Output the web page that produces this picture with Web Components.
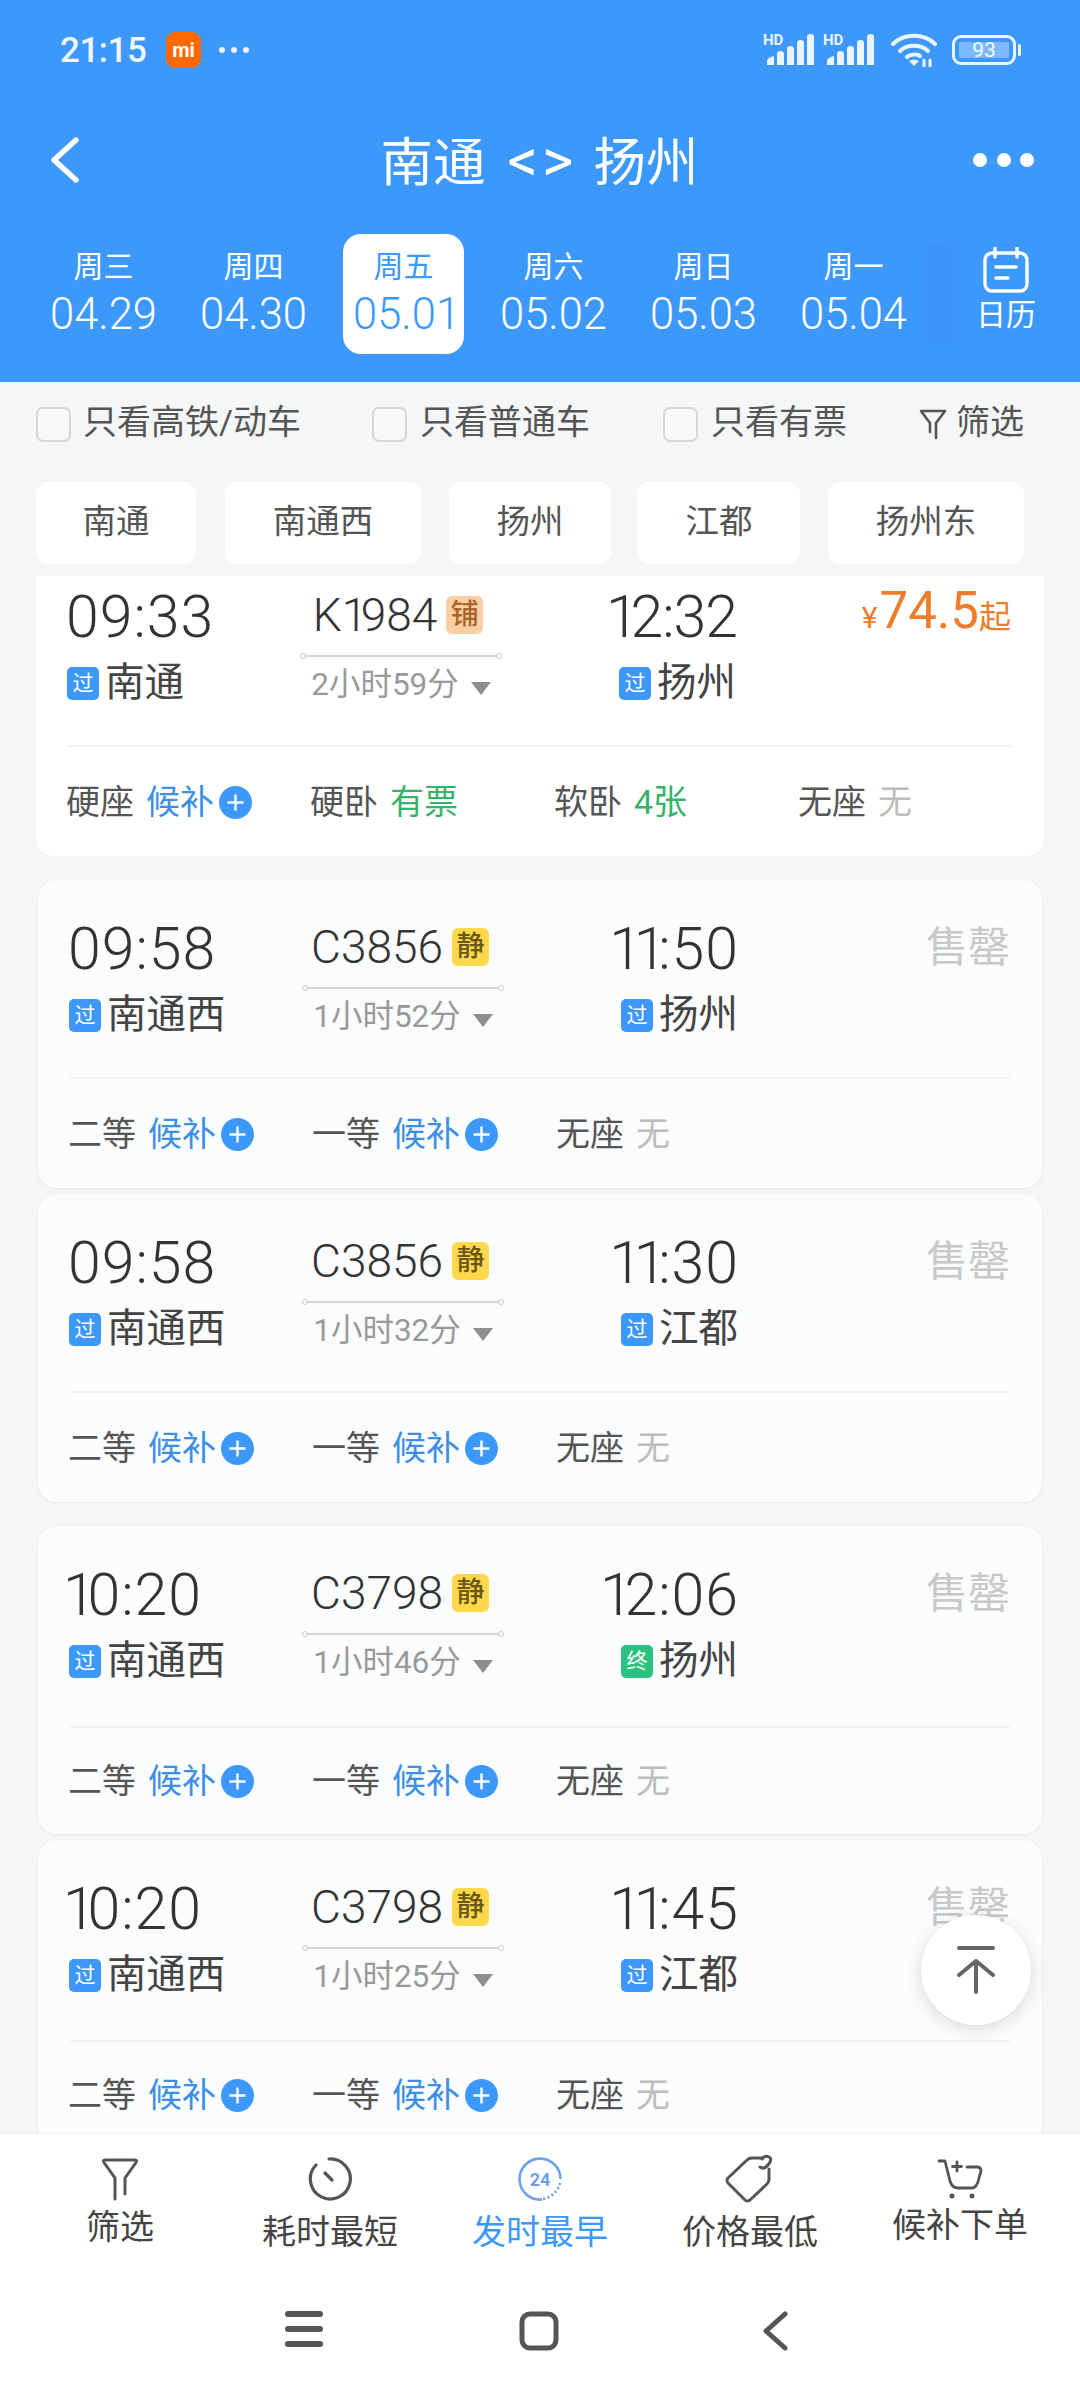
<!DOCTYPE html>
<html lang="zh">
<head>
<meta charset="utf-8">
<title>南通 - 扬州</title>
<style>
  html, body { margin: 0; padding: 0; }
  body {
    width: 1080px; height: 2400px; overflow: hidden;
    display: flex; flex-direction: column;
    background: #f5f6f7; color: #333;
    font-family: Roboto, "Noto Sans CJK SC", sans-serif;
  }
  train-list { flex: 1; min-height: 0; }
</style>
</head>
<body>
<app-header></app-header>
<filter-row></filter-row>
<station-chips></station-chips>
<train-list>
  <train-card first dep="09:33" arr="12:32" tight no="K1984" tag="铺" tagtype="berth" dur="2小时59分" from="南通" to="扬州" price="74.5">
    <seat-item name="硬座" status="候补" kind="wait"></seat-item>
    <seat-item name="硬卧" status="有票" kind="ok"></seat-item>
    <seat-item name="软卧" status="4张" kind="ok"></seat-item>
    <seat-item name="无座" status="无" kind="none"></seat-item>
  </train-card>
  <train-card dep="09:58" arr="11:50" no="C3856" tag="静" dur="1小时52分" from="南通西" to="扬州">
    <seat-item name="二等" status="候补" kind="wait"></seat-item>
    <seat-item name="一等" status="候补" kind="wait"></seat-item>
    <seat-item name="无座" status="无" kind="none"></seat-item>
  </train-card>
  <train-card close dep="09:58" arr="11:30" no="C3856" tag="静" dur="1小时32分" from="南通西" to="江都">
    <seat-item name="二等" status="候补" kind="wait"></seat-item>
    <seat-item name="一等" status="候补" kind="wait"></seat-item>
    <seat-item name="无座" status="无" kind="none"></seat-item>
  </train-card>
  <train-card tall dep="10:20" arr="12:06" no="C3798" tag="静" dur="1小时46分" from="南通西" to="扬州" end>
    <seat-item name="二等" status="候补" kind="wait"></seat-item>
    <seat-item name="一等" status="候补" kind="wait"></seat-item>
    <seat-item name="无座" status="无" kind="none"></seat-item>
  </train-card>
  <train-card tall close dep="10:20" arr="11:45" no="C3798" tag="静" dur="1小时25分" from="南通西" to="江都">
    <seat-item name="二等" status="候补" kind="wait"></seat-item>
    <seat-item name="一等" status="候补" kind="wait"></seat-item>
    <seat-item name="无座" status="无" kind="none"></seat-item>
  </train-card>
  <scroll-top></scroll-top>
</train-list>
<bottom-tabs></bottom-tabs>
<nav-bar></nav-bar>

<script>
const FONT = 'Roboto, "Noto Sans CJK SC", sans-serif';
// the phone font has a narrow 1, Roboto's is tabular
const ONE_CSS = '.one { letter-spacing: -.14em; }';
const narrowOnes = s => s.replace(/1/g, '<span class="one">1</span>');

class StatusBar extends HTMLElement {
  constructor() {
    super();
    this.attachShadow({ mode: 'open' });
    const signal = `
      <svg width="50" height="32" viewBox="0 0 50 32" fill="#eaf4ff">
        <path d="M2 31v-4q0-3 7-5v9zM12 31V20q0-3 3.500-3t3.500 3v11zM22 31V15q0-3 3.500-3t3.500 3v16zM32 31V9q0-3 3.500-3t3.500 3v22zM42 31V3q0-3 3.500-3t3.500 3v28z"/>
      </svg>`;
    this.shadowRoot.innerHTML = `
      <style>
        :host { display: flex; align-items: center; height: 100px; padding: 0 60px; box-sizing: border-box; color: #f0f7ff; }
        .time { font: 500 35px ${FONT}; letter-spacing: -.5px; width: 106px; }
        .mi { width: 35px; height: 36px; border-radius: 9px; background: #ff6900; color: #fff; font: 700 20px Roboto, sans-serif; display: flex; align-items: center; justify-content: center; }
        .dots { display: flex; gap: 6px; margin-left: 18px; }
        .dots i { width: 6px; height: 6px; border-radius: 50%; background: #eaf4ff; }
        .right { margin-left: auto; display: flex; align-items: center; margin-right: -1px; }
        .sig { position: relative; width: 50px; height: 32px; margin-right: 10px; }
        .sig svg { display: block; }
        .sig span { position: absolute; left: -2px; top: 0; font: 700 15px/12px Roboto, sans-serif; color: #eaf4ff; }
        .wifi { margin: 0 15px 0 6px; }
        .bat { width: 64px; height: 30px; border: 3px solid #eaf4ff; border-radius: 9px; box-sizing: border-box; padding: 4px; display: flex; }
        .bat b { flex: 1; background: #7db9fd; border-radius: 2px; font: 400 21px/16px Roboto, sans-serif; text-align: center; color: #f4f9ff; }
        .nub { width: 3px; height: 12px; background: #eaf4ff; border-radius: 2px; margin-left: 2px; }
      </style>
      <span class="time">21:15</span>
      <span class="mi">mi</span>
      <span class="dots"><i></i><i></i><i></i></span>
      <div class="right">
        <div class="sig"><span>HD</span>${signal}</div>
        <div class="sig"><span>HD</span>${signal}</div>
        <svg class="wifi" width="46" height="34" viewBox="0 0 46 34" fill="none" stroke="#eaf4ff" stroke-width="4" stroke-linecap="round">
          <path d="M2 11C13 0 33 0 44 11"/><path d="M9 18C16 11 30 11 37 18"/><path d="M16 24C19 21 27 21 29 23"/>
          <path d="M23 33l-5-5q5-3 10 0z" fill="#eaf4ff" stroke="none"/>
          <path d="M33 33v-6M39 33v-6" stroke-width="3"/>
        </svg>
        <div class="bat"><b>93</b></div><i class="nub"></i>
      </div>`;
  }
}
customElements.define('status-bar', StatusBar);

class DateTab extends HTMLElement {
  constructor() {
    super();
    this.attachShadow({ mode: 'open' });
    this.shadowRoot.innerHTML = `
      <style>
        :host { display: flex; flex-direction: column; align-items: center; width: 121px; height: 120px; border-radius: 18px; color: #fff; box-sizing: border-box; padding-top: 13px; }
        :host([active]) { background: #fff; color: #3d98fc; }
        .w { font: 400 30px/40px ${FONT}; }
        .d { font: 300 43.500px/50px ${FONT}; margin-top: 3px; white-space: nowrap; }
        ${ONE_CSS}
      </style>
      <span class="w">${this.getAttribute('week')}</span>
      <span class="d">${narrowOnes(this.getAttribute('date'))}</span>`;
  }
}
customElements.define('date-tab', DateTab);

class AppHeader extends HTMLElement {
  constructor() {
    super();
    this.attachShadow({ mode: 'open' });
    this.shadowRoot.innerHTML = `
      <style>
        :host { display: block; height: 382px; background: #3d98fc; color: #fff; }
        .title { display: flex; align-items: center; height: 120px; padding: 0 46px 0 48px; }
        h1 { margin: -5px 0 0; flex: 1; text-align: center; white-space: nowrap; font: 400 52.500px ${FONT}; padding-left: 24px; box-sizing: border-box; }
        h1 span { margin: 0 16px 0 22px; font-size: 60px; letter-spacing: 4px; }
        .more { display: flex; gap: 9.500px; }
        .more i { width: 14px; height: 14px; border-radius: 50%; background: #fff; }
        .dates { display: flex; gap: 29px; padding: 14px 0 0 43px; align-items: flex-start; }
        .cal { position: relative; margin-left: 8px; padding: 13px 0 0 10px; width: 90px; display: flex; flex-direction: column; align-items: center; font: 400 30px/40px ${FONT}; }
        .cal span { margin-top: 2px; }
        .cal::before { content: ""; position: absolute; left: -34px; top: 12px; width: 44px; height: 98px; background: linear-gradient(90deg, rgba(61,152,252,0), rgba(50,138,242,.4), rgba(61,152,252,0)); }
      </style>
      <status-bar></status-bar>
      <div class="title">
        <svg width="34" height="46" viewBox="0 0 34 46" fill="none" stroke="#fff" stroke-width="5.500" stroke-linecap="round" stroke-linejoin="round"><path d="M28 3L6 23l22 20"/></svg>
        <h1>南通<span>&lt;&gt;</span>扬州</h1>
        <div class="more"><i></i><i></i><i></i></div>
      </div>
      <div class="dates">
        <date-tab week="周三" date="04.29"></date-tab>
        <date-tab week="周四" date="04.30"></date-tab>
        <date-tab week="周五" date="05.01" active></date-tab>
        <date-tab week="周六" date="05.02"></date-tab>
        <date-tab week="周日" date="05.03"></date-tab>
        <date-tab week="周一" date="05.04"></date-tab>
        <div class="cal">
          <svg width="46" height="46" viewBox="0 0 46 46" fill="none" stroke="#fff" stroke-width="3.400" stroke-linecap="round"><rect x="2" y="6" width="42" height="38" rx="7"/><path d="M12 1v9M34 1v9M13 20h20M13 31h12"/></svg>
          <span>日历</span>
        </div>
      </div>`;
  }
}
customElements.define('app-header', AppHeader);

class FilterRow extends HTMLElement {
  constructor() {
    super();
    this.attachShadow({ mode: 'open' });
    const opt = (t, w) => `<label style="width:${w}px"><i></i><span>${t}</span></label>`;
    this.shadowRoot.innerHTML = `
      <style>
        :host { display: flex; align-items: flex-start; height: 82px; padding: 25px 0 0 36px; box-sizing: border-box; color: #555; font: 400 34px/36px ${FONT}; }
        label { display: flex; align-items: center; white-space: nowrap; }
        label span { margin-top: -6px; }
        i { width: 35px; height: 35px; box-sizing: border-box; border: 2px solid #d4d6d9; border-radius: 7px; background: #f7f8f9; margin-right: 12px; flex: none; }
        label + label span { margin-left: 1px; }
        .f { display: flex; align-items: center; gap: 9px; }
        .f span { margin-top: -3px; }
      </style>
      ${opt('只看高铁/动车', 336)}${opt('只看普通车', 291)}${opt('只看有票', 256)}
      <div class="f">
        <svg width="28" height="32" viewBox="0 0 28 32" fill="none" stroke="#555" stroke-width="2.600" stroke-linejoin="round" stroke-linecap="round"><path d="M2 3h24l-9 12v15M11 24V15L2 3"/></svg>
        <span>筛选</span>
      </div>`;
  }
}
customElements.define('filter-row', FilterRow);

class StationChips extends HTMLElement {
  constructor() {
    super();
    this.attachShadow({ mode: 'open' });
    const chips = [['南通', 160, 0], ['南通西', 196, 29], ['扬州', 162, 28], ['江都', 162, 27], ['扬州东', 196, 28]];
    this.shadowRoot.innerHTML = `
      <style>
        :host { display: flex; height: 112px; padding: 18px 0 0 36px; box-sizing: border-box; }
        div { height: 82px; background: #fff; border-radius: 12px; color: #555; font: 400 33.500px/80px ${FONT}; text-align: center; }
      </style>
      ${chips.map(c => `<div style="width:${c[1]}px;margin-left:${c[2]}px">${c[0]}</div>`).join('')}`;
  }
}
customElements.define('station-chips', StationChips);

class TrainList extends HTMLElement {
  constructor() {
    super();
    this.attachShadow({ mode: 'open' });
    this.shadowRoot.innerHTML = `
      <style>
        :host { display: block; position: relative; overflow: hidden; }
        .wrap { display: flex; flex-direction: column; padding: 0 36px; margin-top: -30px; }
      </style>
      <div class="wrap"><slot></slot></div>`;
  }
}
customElements.define('train-list', TrainList);

class SeatItem extends HTMLElement {
  constructor() {
    super();
    this.attachShadow({ mode: 'open' });
    const kind = this.getAttribute('kind');
    const plus = kind === 'wait' ? `
      <svg class="plus" width="33" height="33" viewBox="0 0 33 33"><circle cx="16.500" cy="16.500" r="16.500" fill="#3d98fc"/><path d="M16.500 8.500v16M8.500 16.500h16" stroke="#fff" stroke-width="2.400"/></svg>` : '';
    this.shadowRoot.innerHTML = `
      <style>
        :host { display: flex; align-items: center; font: 400 34px/40px ${FONT}; color: #555; white-space: nowrap; margin-left: -2px; }
        .s { margin-left: 12px; }
        .wait { color: #3d8fe6; }
        .ok { color: #38b26a; }
        .none { color: #bdbdbd; }
        .plus { margin-left: 5px; }
      </style>
      <span>${this.getAttribute('name')}</span>
      <span class="s ${kind}">${this.getAttribute('status')}</span>${plus}`;
  }
}
customElements.define('seat-item', SeatItem);

class TrainCard extends HTMLElement {
  constructor() {
    super();
    this.attachShadow({ mode: 'open' });
    const a = n => this.getAttribute(n);
    const right = a('price')
      ? `<div class="price"><small>¥</small>${a('price')}<em>起</em></div>`
      : `<div class="sold">售罄</div>`;
    this.shadowRoot.innerHTML = `
      <style>
        :host { display: block; height: 308px; margin: 24px 2px 0; background: #fbfcfe; border-radius: 18px; box-shadow: 0 1px 3px rgba(0,0,0,.06), 0 0 2px rgba(0,0,0,.05); padding: 0 32px; box-sizing: border-box; position: relative; }
        :host([close]) { margin-top: 6px; }
        :host([first]) { background: #fff; margin: 0; padding: 2px 33px 0 32px; box-shadow: none; height: 310px; }
        .top { display: grid; grid-template-columns: 233px 200px 234px 1fr; height: 197px; border-bottom: 2px solid #f0f1f3; }
        :host([tall]) .top { height: 200px; }
        :host([tall]) .seats { padding-top: 33px; }
        .dep, .arr { display: flex; flex-direction: column; }
        .arr { align-items: flex-end; margin-right: -2px; }
        .t { font: 300 59px/68px ${FONT}; color: #333; margin-top: 35px; letter-spacing: 1px; margin-left: -2px; }
        .t.lead { margin-left: -7px; }
        :host([tight]) .arr .t { letter-spacing: -1px; }
        .st { display: flex; align-items: center; font: 400 39.500px/46px ${FONT}; color: #444; margin-top: 9px; gap: 6px; white-space: nowrap; margin-left: -1px; }
        .arr .st { margin-right: 1px; }
        .st b { width: 32px; height: 33px; border-radius: 5px; background: #3d98fc; color: #fff; font: 400 21px/33px ${FONT}; text-align: center; }
        .st b.end { background: #2cc17f; }
        .mid { display: flex; flex-direction: column; align-items: center; }
        .no { display: flex; align-items: center; gap: 9px; height: 40px; margin-top: 47px; font: 300 46px/40px ${FONT}; color: #333; margin-left: -6px; }
        .no b { width: 37px; height: 38px; border-radius: 6px; background: #ffd84d; color: #6a5813; font: 500 28px/38px ${FONT}; text-align: center; }
        .no b.berth { background: #fbcfa5; color: #a9642a; }
        .line { position: relative; align-self: stretch; height: 2px; background: #d5d6d8; margin: 20px 0 0; }
        .line::before, .line::after { content: ""; position: absolute; top: -2px; width: 6px; height: 6px; box-sizing: border-box; border: 1px solid #c8c9cb; border-radius: 50%; background: #fff; }
        .line::before { left: -1px; } .line::after { right: -1px; }
        .dur { display: flex; align-items: center; gap: 12px; margin-top: 7px; font: 400 31.500px/42px ${FONT}; color: #999; white-space: nowrap; }
        .dur i { width: 0; height: 0; border-left: 10px solid transparent; border-right: 10px solid transparent; border-top: 13px solid #8e8e8e; margin-top: 6px; }
        .right { text-align: right; }
        .sold { margin-top: 42px; font: 400 42px/52px ${FONT}; color: #c8c8c8; }
        .price { margin-top: 33px; font: 400 51px/60px ${FONT}; color: #ed7d2b; }
        .price small { font-size: 30px; margin-right: 2px; }
        .price em { font-style: normal; font-size: 32px; }
        .seats { display: grid; grid-template-columns: repeat(4, 244px); padding-top: 35px; }
        ::slotted(seat-item) { height: 40px; }
        ${ONE_CSS}
      </style>
      <div class="top">
        <div class="dep">
          <span class="t ${a('dep')[0] === '1' ? 'lead' : ''}">${narrowOnes(a('dep'))}</span>
          <div class="st"><b>过</b>${a('from')}</div>
        </div>
        <div class="mid">
          <div class="no"><span>${narrowOnes(a('no'))}</span><b class="${a('tagtype') || ''}">${a('tag')}</b></div>
          <div class="line"></div>
          <div class="dur">${a('dur')}<i></i></div>
        </div>
        <div class="arr">
          <span class="t">${narrowOnes(a('arr'))}</span>
          <div class="st"><b class="${this.hasAttribute('end') ? 'end' : ''}">${this.hasAttribute('end') ? '终' : '过'}</b>${a('to')}</div>
        </div>
        <div class="right">${right}</div>
      </div>
      <div class="seats"><slot></slot></div>`;
  }
}
customElements.define('train-card', TrainCard);

class ScrollTop extends HTMLElement {
  constructor() {
    super();
    this.attachShadow({ mode: 'open' });
    this.shadowRoot.innerHTML = `
      <style>
        :host { position: absolute; left: 921px; top: 1339px; width: 110px; height: 110px; border-radius: 50%; background: #fff; box-shadow: 0 4px 18px rgba(0,0,0,.14); display: flex; align-items: center; justify-content: center; }
      </style>
      <svg width="40" height="50" viewBox="0 0 40 50" fill="none" stroke="#666" stroke-width="4" stroke-linecap="round" stroke-linejoin="round"><path d="M3 3h34M20 47V16M3 30l17-14 17 14"/></svg>`;
  }
}
customElements.define('scroll-top', ScrollTop);

class TabItem extends HTMLElement {
  constructor() {
    super();
    this.attachShadow({ mode: 'open' });
    this.shadowRoot.innerHTML = `
      <style>
        :host { flex: none; width: 210px; display: flex; flex-direction: column; align-items: center; color: #444; font: 400 34px/40px ${FONT}; }
        :host([active]) { color: #3d98fc; }
        .i { height: 50px; display: flex; align-items: center; justify-content: center; }
      </style>
      <div class="i"><slot></slot></div>
      <span style="margin-top:${this.getAttribute('gap') || 0}px">${this.getAttribute('label')}</span>`;
  }
}
customElements.define('tab-item', TabItem);

class BottomTabs extends HTMLElement {
  constructor() {
    super();
    this.attachShadow({ mode: 'open' });
    this.shadowRoot.innerHTML = `
      <style>
        :host { display: flex; height: 146px; background: #fff; padding: 20px 0 0 15px; box-sizing: border-box; box-shadow: 0 -1px 2px rgba(0,0,0,.06); position: relative; }
      </style>
      <tab-item label="筛选" gap="3">
        <svg width="38" height="44" viewBox="0 0 38 44" fill="none" stroke="#555" stroke-width="3" stroke-linejoin="round" stroke-linecap="round"><path d="M4 3h30q2.500 0 1 2.500L24 21v16M4 3q-2.500 0-1 2.500L14 21v21"/></svg>
      </tab-item>
      <tab-item label="耗时最短" gap="8">
        <svg width="46" height="46" viewBox="0 0 46 46" fill="none" stroke="#555" stroke-width="3.200" stroke-linecap="round"><path d="M22 3A20 20 0 1 1 9 9"/><path d="M18 17l7 7"/></svg>
      </tab-item>
      <tab-item label="发时最早" active gap="8">
        <svg width="46" height="46" viewBox="0 0 46 46" fill="none" stroke="#6f9fe8" stroke-width="2.600"><path d="M43 27A20.500 20.500 0 0 1 25 43" stroke-dasharray="2 2.500"/><path d="M25 43.500A20.500 20.500 0 1 1 43.500 23"/><text x="23" y="29.500" text-anchor="middle" font-family="Roboto, sans-serif" font-weight="700" font-size="18" fill="#6f9fe8" stroke="none">24</text></svg>
      </tab-item>
      <tab-item label="价格最低" gap="8">
        <svg width="50" height="50" viewBox="0 0 50 50" fill="none" stroke="#555" stroke-width="3" stroke-linejoin="round" stroke-linecap="round"><path d="M3 24L22 6q2-2 5-2h10M44 15v10q0 3-2 5L25 46q-3 2-5 0L3 29q-2-3 0-5"/><path d="M35 13q4 3 8-2 5-6 1-8-4-2-7 2"/></svg>
      </tab-item>
      <tab-item label="候补下单" gap="1">
        <svg width="46" height="42" viewBox="0 0 46 42" fill="none" stroke="#555" stroke-width="2.800" stroke-linecap="round" stroke-linejoin="round"><path d="M2 3h6l5 20q2 7 8 7h14q5 0 7-10l2-7q0-4-4-4H30"/><path d="M20 4v9M15.500 8.500h9"/><path d="M15 38v.1M35 38v.1" stroke-width="5"/></svg>
      </tab-item>`;
  }
}
customElements.define('bottom-tabs', BottomTabs);

class NavBar extends HTMLElement {
  constructor() {
    super();
    this.attachShadow({ mode: 'open' });
    this.shadowRoot.innerHTML = `
      <style>
        :host { display: flex; align-items: flex-start; height: 120px; background: #fff; padding: 31px 0 0 285px; box-sizing: border-box; }
        svg + svg { margin-left: 196px; }
        svg:last-child { margin-left: 203px; }
      </style>
      <svg width="38" height="36" viewBox="0 0 38 36" fill="none" stroke="#555" stroke-width="6" stroke-linecap="round"><path d="M3 3h32M3 18h32M3 33h32"/></svg>
      <svg width="40" height="40" viewBox="0 0 40 40" fill="none" stroke="#555" stroke-width="5"><rect x="3" y="3" width="34" height="34" rx="8"/></svg>
      <svg width="26" height="40" viewBox="0 0 26 40" fill="none" stroke="#555" stroke-width="5" stroke-linecap="round" stroke-linejoin="round"><path d="M23 3L4 20l19 17"/></svg>`;
  }
}
customElements.define('nav-bar', NavBar);
</script>
</body>
</html>
